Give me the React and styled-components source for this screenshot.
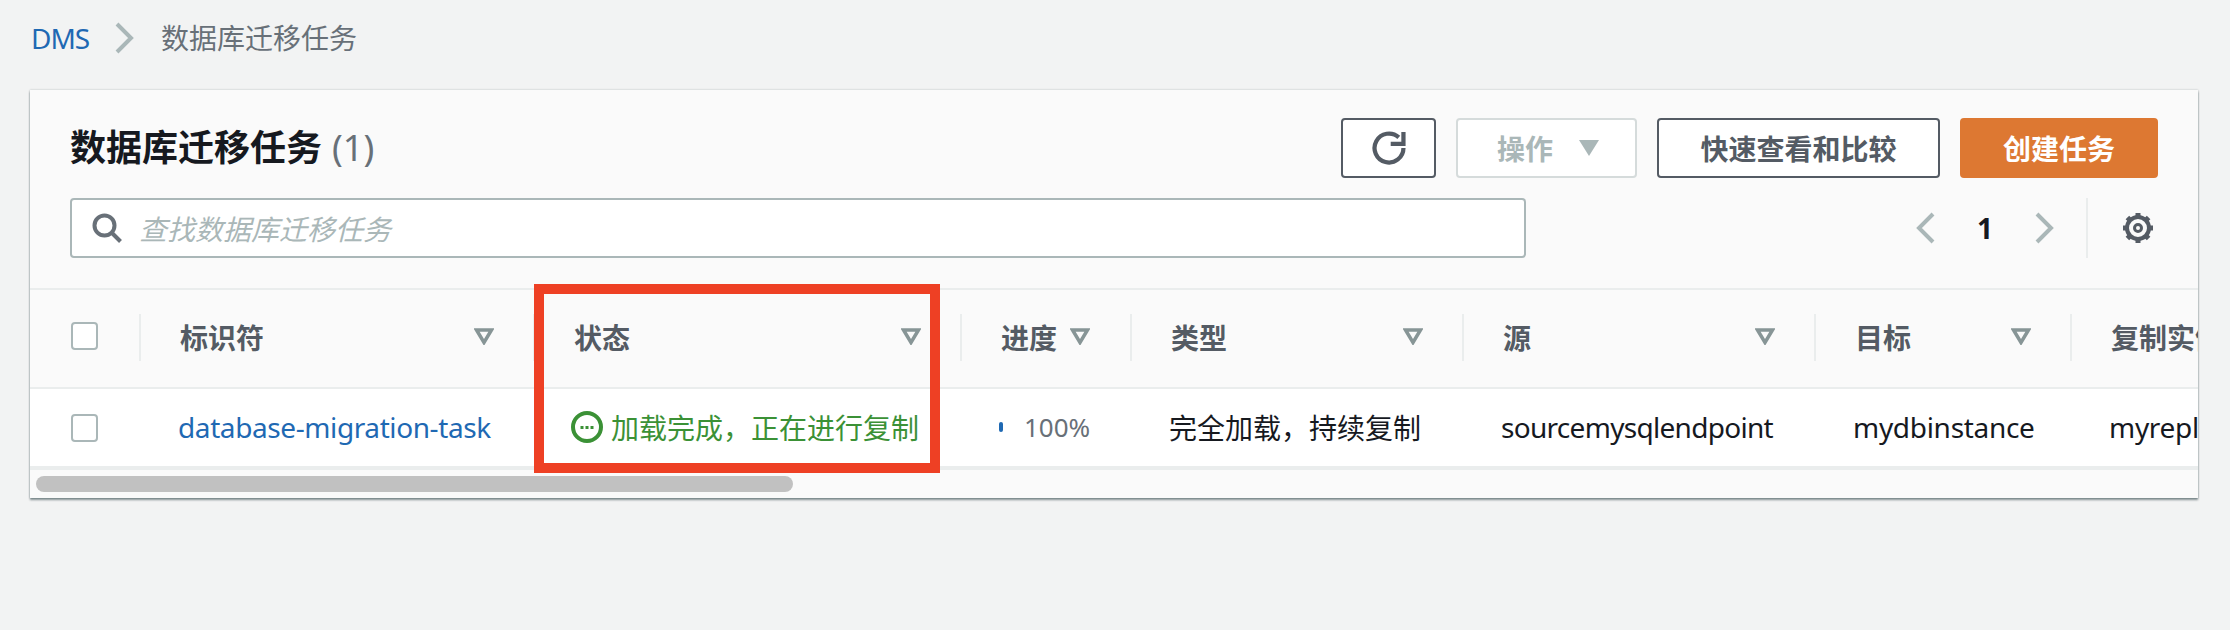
import React from "react";
import styled, { createGlobalStyle } from "styled-components";

const GlobalStyle = createGlobalStyle`
  html, body { margin: 0; padding: 0; background: #f2f3f3; }
  body { font-family: "Noto Sans", "Noto Sans CJK SC", sans-serif; font-size: 28px; color: #16191f; }
  * { box-sizing: border-box; }
`;

const COLUMNS = "109px 394px 427px 170px 332px 352px 256px 128px";

const Page = styled.div`
  width: 2230px;
  height: 630px;
  overflow: hidden;
  padding-left: 30px;
`;
const Breadcrumbs = styled.nav`
  height: 90px;
  padding: 0 0 14px 1px;
  display: flex;
  align-items: center;
  line-height: 40px;
`;
const CrumbLink = styled.span`
  color: #1f69b3;
  width: 57px;
  letter-spacing: -1px;
`;
const CrumbSep = styled.svg`
  width: 20px;
  height: 32px;
  margin: 0 27px 0 26px;
  fill: none;
  stroke: #aab7b8;
  stroke-width: 4;
`;
const CrumbCurrent = styled.span`
  color: #687078;
`;
const Card = styled.section`
  position: relative;
  width: 2168px;
  height: 408px;
  background: #fafafa;
  box-shadow: 0 2px 2px rgba(0, 28, 36, 0.45), 0 0 2px rgba(0, 28, 36, 0.25);
  overflow: hidden;
`;
const CardHeader = styled.header`
  height: 198px;
  padding: 28px 40px 0 40px;
`;
const TopRow = styled.div`
  display: flex;
  align-items: center;
  justify-content: space-between;
  height: 60px;
`;
const Title = styled.h1`
  margin: 0;
  font-size: 36px;
  font-weight: 700;
  line-height: 50px;
`;
const Count = styled.span`
  font-weight: 400;
  color: #687078;
  margin-left: 10px;
`;
const Actions = styled.div`
  display: flex;
  gap: 20px;
`;
const Button = styled.button`
  width: ${(p) => p.$w}px;
  height: 60px;
  padding: 0;
  border-radius: 4px;
  border: 2px solid ${(p) => (p.$primary ? "#dd7832" : p.disabled ? "#d5dbdb" : "#545b64")};
  background: ${(p) => (p.$primary ? "#dd7832" : "#fff")};
  color: ${(p) => (p.$primary ? "#fff" : p.disabled ? "#aab7b8" : "#545b64")};
  font: 700 28px "Noto Sans", "Noto Sans CJK SC", sans-serif;
  display: flex;
  align-items: center;
  justify-content: center;
  gap: 26px;
`;
const DisabledButton = styled(Button)`
  padding-left: 3px;
`;
const RefreshIcon = styled.svg`
  width: 34px;
  height: 34px;
  fill: none;
  stroke: #545b64;
  stroke-width: 2;
`;
const Caret = styled.svg`
  width: 20px;
  height: 16px;
  fill: #aab7b8;
`;
const BottomRow = styled.div`
  display: flex;
  align-items: center;
  height: 60px;
  margin-top: 20px;
`;
const Search = styled.div`
  width: 1456px;
  height: 60px;
  border: 2px solid #aab7b8;
  border-radius: 4px;
  background: #fff;
  display: flex;
  align-items: center;
  padding-left: 20px;
  gap: 17px;
  color: #aab7b8;
  font-style: italic;
`;
const SearchIcon = styled.svg`
  width: 30px;
  height: 30px;
  fill: none;
  stroke: #687078;
  stroke-width: 4;
`;
const Pager = styled.div`
  margin-left: auto;
  display: flex;
  align-items: center;
  height: 60px;
  padding-right: 4px;
`;
const PagerChevron = styled.svg`
  width: 20px;
  height: 32px;
  fill: none;
  stroke: #aab7b8;
  stroke-width: 4;
`;
const PageNumber = styled.span`
  width: 100px;
  text-align: center;
  font-weight: 700;
  font-size: 28px;
`;
const PagerDivider = styled.span`
  width: 2px;
  height: 60px;
  background: #eaeded;
  margin: 0 34px 0 31px;
`;
const GearIcon = styled.svg`
  width: 32px;
  height: 32px;
  fill: none;
  stroke: #545b64;
`;
const Table = styled.div`
  width: 2168px;
  overflow: hidden;
`;
const Row = styled.div`
  display: grid;
  grid-template-columns: ${COLUMNS};
  width: 2168px;
  height: ${(p) => p.$h}px;
  background: ${(p) => p.$bg};
  border-top: 2px solid #eaeded;
`;
const HeadCell = styled.div`
  display: flex;
  align-items: center;
  height: 47px;
  margin-top: 24px;
  padding: 0 39px 2px 39px;
  border-left: 2px solid #eaeded;
  justify-content: space-between;
  font-weight: 700;
  color: #545b64;
  white-space: nowrap;
  overflow: hidden;
`;
const NarrowHead = styled(HeadCell)`
  justify-content: flex-start;
  gap: 13px;
  padding-right: 0;
`;
const CheckCell = styled.div`
  padding-left: 41px;
  display: flex;
  align-items: ${(p) => (p.$head ? "flex-start" : "center")};
  padding-top: ${(p) => (p.$head ? "32px" : "0")};
`;
const Checkbox = styled.span`
  width: 27px;
  height: 28px;
  border: 2px solid #aab7b8;
  border-radius: 4px;
  background: #fff;
`;
const FilterIcon = styled.svg`
  width: 20px;
  height: 17px;
  flex: none;
  fill: none;
  stroke: #879596;
  stroke-width: 3.5;
`;
const Cell = styled.div`
  display: flex;
  align-items: center;
  padding: 0 0 2px 39px;
  white-space: nowrap;
  overflow: hidden;
  color: ${(p) => p.$color || "#16191f"};
  letter-spacing: ${(p) => p.$spacing || "0"};
`;
const StatusIcon = styled.svg`
  width: 32px;
  height: 32px;
  flex: none;
  margin-right: 8px;
  margin-left: -1px;
  fill: none;
  stroke: #3b9136;
  stroke-width: 4;
`;
const ProgressTick = styled.span`
  width: 4px;
  height: 10px;
  border-radius: 2px;
  background: #1f69b3;
  margin-right: 21px;
`;
const ProgressValue = styled.span`
  color: #687078;
  font-size: 26px;
`;
const TableEnd = styled.div`
  height: 4px;
  background: #eaeded;
`;
const ScrollTrack = styled.div`
  height: 24px;
  padding: 6px 0 2px 6px;
`;
const ScrollThumb = styled.div`
  width: 757px;
  height: 16px;
  border-radius: 8px;
  background: #c1c1c1;
`;
const Highlight = styled.div`
  position: absolute;
  left: 504px;
  top: 194px;
  width: 406px;
  height: 189px;
  border: 10px solid #ee4024;
`;

const Filter = () => (
  <FilterIcon viewBox="0 0 20 17">
    <path d="M2.5 2h15L10 14.5z" strokeLinejoin="miter" />
  </FilterIcon>
);

const HEAD = [
  ["标识符", false],
  ["状态", false],
  ["进度", true],
  ["类型", false],
  ["源", false],
  ["目标", false],
];

export default function App() {
  return (
    <Page>
      <GlobalStyle />
      <Breadcrumbs>
        <CrumbLink>DMS</CrumbLink>
        <CrumbSep viewBox="0 0 20 32">
          <path d="M3 2l14 14L3 30" />
        </CrumbSep>
        <CrumbCurrent>数据库迁移任务</CrumbCurrent>
      </Breadcrumbs>
      <Card>
        <CardHeader>
          <TopRow>
            <Title>
              数据库迁移任务<Count>(1)</Count>
            </Title>
            <Actions>
              <Button $w={95} aria-label="刷新">
                <RefreshIcon viewBox="0 0 16 16">
                  <path d="M14.8 8a6.8 6.8 0 1 1-2.2-5" />
                  <path d="M8.8 6h6V0.5" />
                </RefreshIcon>
              </Button>
              <DisabledButton $w={181} disabled>
                操作
                <Caret viewBox="0 0 20 16">
                  <path d="M0 0h20L10 16z" />
                </Caret>
              </DisabledButton>
              <Button $w={283}>快速查看和比较</Button>
              <Button $w={198} $primary>
                创建任务
              </Button>
            </Actions>
          </TopRow>
          <BottomRow>
            <Search>
              <SearchIcon viewBox="0 0 30 30">
                <circle cx="12.5" cy="12.5" r="10" />
                <path d="M19.5 19.5l9 9" />
              </SearchIcon>
              查找数据库迁移任务
            </Search>
            <Pager>
              <PagerChevron viewBox="0 0 20 32">
                <path d="M18 2L4 16l14 14" />
              </PagerChevron>
              <PageNumber>1</PageNumber>
              <PagerChevron viewBox="0 0 20 32">
                <path d="M2 2l14 14L2 30" />
              </PagerChevron>
              <PagerDivider />
              <GearIcon viewBox="0 0 32 32">
                <circle cx="16" cy="16" r="11" strokeWidth="4" />
                <circle cx="16" cy="16" r="3.5" strokeWidth="3" />
                <g strokeWidth="5">
                  {[0, 45, 90, 135, 180, 225, 270, 315].map((a) => (
                    <path key={a} d="M16 1v4" transform={`rotate(${a} 16 16)`} />
                  ))}
                </g>
              </GearIcon>
            </Pager>
          </BottomRow>
        </CardHeader>
        <Table>
          <Row $h={99} $bg="#fafafa">
            <CheckCell $head>
              <Checkbox />
            </CheckCell>
            {HEAD.map(([label, narrow]) => {
              const Head = narrow ? NarrowHead : HeadCell;
              return (
                <Head key={label}>
                  {label}
                  <Filter />
                </Head>
              );
            })}
            <HeadCell>复制实例</HeadCell>
          </Row>
          <Row $h={79} $bg="#fff">
            <CheckCell>
              <Checkbox />
            </CheckCell>
            <Cell $color="#1f69b3" $spacing="-0.4px">database-migration-task</Cell>
            <Cell $color="#3b9136">
              <StatusIcon viewBox="0 0 32 32">
                <circle cx="16" cy="16" r="14" />
                <path d="M9.5 16.5h13" strokeDasharray="3 2" strokeWidth="3" />
              </StatusIcon>
              加载完成，正在进行复制
            </Cell>
            <Cell>
              <ProgressTick />
              <ProgressValue>100%</ProgressValue>
            </Cell>
            <Cell>完全加载，持续复制</Cell>
            <Cell $spacing="-0.7px">sourcemysqlendpoint</Cell>
            <Cell $spacing="-0.3px">mydbinstance</Cell>
            <Cell $spacing="-0.3px">myreplicationinstance</Cell>
          </Row>
          <TableEnd />
          <ScrollTrack>
            <ScrollThumb />
          </ScrollTrack>
        </Table>
        <Highlight />
      </Card>
    </Page>
  );
}
